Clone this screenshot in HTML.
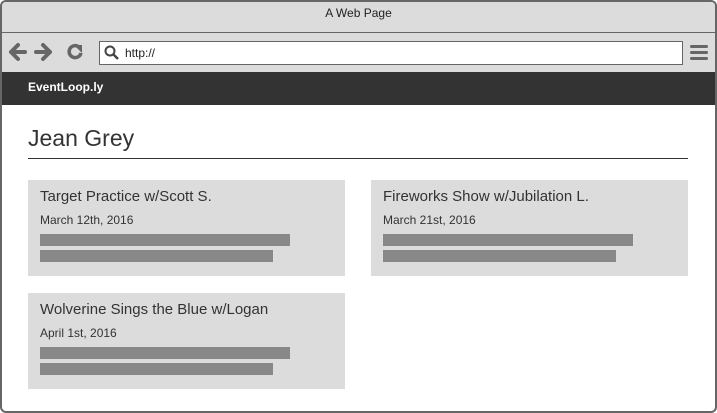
<!DOCTYPE html>
<html><head><style>
*{margin:0;padding:0;box-sizing:border-box}
body{width:717px;height:413px;background:#fff;position:relative;overflow:hidden;font-family:"Liberation Sans",sans-serif;color:#333}
.a{position:absolute}
.card{position:absolute;background:#dcdcdc;width:317px;height:96px}
.card .t{position:absolute;left:12px;top:8px;font-size:15px;color:#333}
.card .d{position:absolute;left:12px;top:33px;font-size:12px;color:#333}
.card .b1{position:absolute;left:12px;top:54px;width:250px;height:12px;background:#888}
.card .b2{position:absolute;left:12px;top:70px;width:233px;height:12px;background:#888}
</style></head><body>
<div class="a" style="left:0;top:0;width:717px;height:413px;border:2px solid #666;border-radius:6px"></div>
<div class="a" style="left:2px;top:2px;width:713px;height:30px;background:#dcdcdc;border-radius:4px 4px 0 0"></div>
<div class="a" style="left:0;top:6px;width:717px;text-align:center;font-size:12px;color:#222">A Web Page</div>
<div class="a" style="left:2px;top:32px;width:713px;height:1px;background:#666"></div>
<div class="a" style="left:2px;top:33px;width:713px;height:39px;background:#dcdcdc"></div>
<svg class="a" style="left:8px;top:42px" width="80" height="20" viewBox="0 0 80 20">
<path d="M3 10h14M10 3l-7 7 7 7" stroke="#666" stroke-width="4" fill="none" stroke-linecap="round" stroke-linejoin="round"/>
<path d="M28 10h14M35 3l7 7-7 7" stroke="#666" stroke-width="4" fill="none" stroke-linecap="round" stroke-linejoin="round"/>
<path d="M71 5a6 6 0 1 0 2 6" stroke="#666" stroke-width="3.5" fill="none"/>
<path d="M66 3h8v8z" fill="#666"/>
</svg>
<div class="a" style="left:99px;top:41px;width:584px;height:24px;background:#fff;border:1px solid #666"></div>
<svg class="a" style="left:104px;top:45px" width="16" height="16"><circle cx="6" cy="6" r="4.5" stroke="#444" stroke-width="2" fill="none"/><path d="M9 9l5 5" stroke="#444" stroke-width="2.5"/></svg>
<div class="a" style="left:125px;top:46px;font-size:12px;color:#222">http://</div>
<div class="a" style="left:690px;top:45px;width:18px;height:3px;background:#666;border-radius:2px"></div>
<div class="a" style="left:690px;top:51px;width:18px;height:3px;background:#666;border-radius:2px"></div>
<div class="a" style="left:690px;top:57px;width:18px;height:3px;background:#666;border-radius:2px"></div>
<div class="a" style="left:2px;top:72px;width:713px;height:33px;background:#333"></div>
<div class="a" style="left:28px;top:80px;font-size:12px;font-weight:bold;color:#fff">EventLoop.ly</div>
<div class="a" style="left:28px;top:125px;font-size:23px;color:#333">Jean Grey</div>
<div class="a" style="left:28px;top:158px;width:660px;height:1px;background:#333"></div>
<div class="card" style="left:28px;top:180px"><div class="t">Target Practice w/Scott S.</div><div class="d">March 12th, 2016</div><div class="b1"></div><div class="b2"></div></div>
<div class="card" style="left:371px;top:180px"><div class="t">Fireworks Show w/Jubilation L.</div><div class="d">March 21st, 2016</div><div class="b1"></div><div class="b2"></div></div>
<div class="card" style="left:28px;top:293px"><div class="t">Wolverine Sings the Blue w/Logan</div><div class="d">April 1st, 2016</div><div class="b1"></div><div class="b2"></div></div>
</body></html>
